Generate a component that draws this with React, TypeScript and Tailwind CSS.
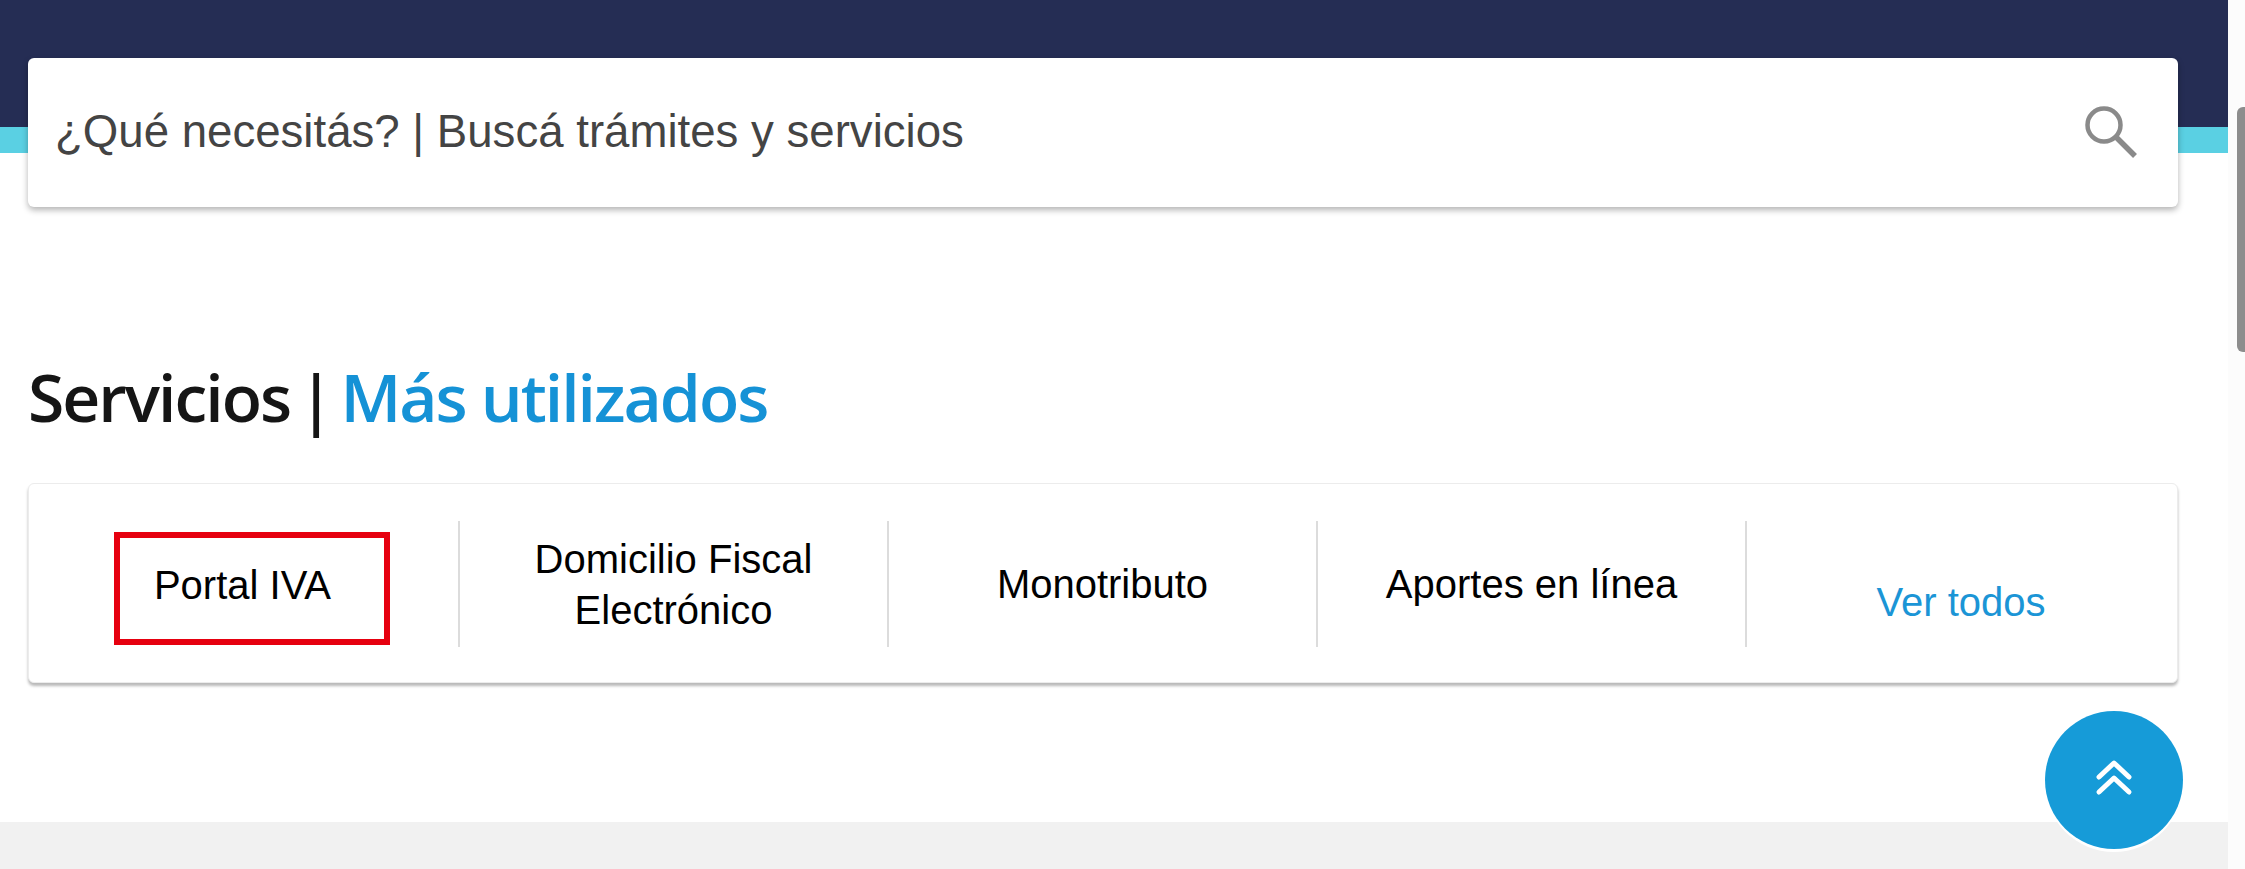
const services = [
    { label: ["Portal IVA"], marked: true },
    { label: ["Domicilio Fiscal", "Electrónico"] },
    { label: ["Monotributo"] },
    { label: ["Aportes en línea"] },
]

export default function App() {
    return (
        <div className="relative flex h-[869px] w-full overflow-hidden bg-white font-['Liberation_Sans',Arial,sans-serif]">
            <main className="flex w-[2228px] flex-col">
                <header className="h-[153px] border-b-[26px] border-[#5ad0e3] bg-[#252d54]" />

                <div className="relative mx-[28px] -mt-[95px] flex h-[149px] w-[2150px] items-center justify-between rounded-md bg-white pb-[2px] pl-[27px] pr-[40px] shadow-[0_3px_6px_rgba(0,0,0,0.3)]">
                    <span className="text-[45.6px] leading-none text-[#444444]">¿Qué necesitás? | Buscá trámites y servicios</span>
                    <svg width="54" height="54" viewBox="0 0 54 54" fill="none" stroke="#8a8a8a" strokeWidth="4.5">
                        <circle cx="20" cy="20" r="16.5" />
                        <path d="M32 32 L51 51" strokeWidth="5.5" />
                    </svg>
                </div>

                <h2 className="mx-[28px] mt-[134px] h-[110px] text-[66px] font-semibold leading-[110px] tracking-[-2px] text-[#151515] font-['Open_Sans',sans-serif]">
                    Servicios<span className="mx-[8px]">|</span><span className="text-[#1592d6]">Más utilizados</span>
                </h2>

                <section className="mx-[28px] mt-[32px] flex h-[200px] w-[2150px] items-center rounded-md border border-[#ececec] bg-white pl-[2px] shadow-[0_3px_3px_rgba(0,0,0,0.28)]">
                    {services.map((service, i) => (
                        <div key={i} className="mt-[2px] flex h-[126px] w-[429px] items-center justify-center border-r-2 border-[#dcdcdc] text-center text-[40px] leading-[51px] text-black">
                            {service.marked ? (
                                <div className="ml-[14px] mt-[8px] flex h-[113px] w-[276px] shrink-0 items-center justify-center border-[6px] border-[#e6000f] pb-[6px] pr-[18px]">
                                    {service.label[0]}
                                </div>
                            ) : (
                                <div className="mt-[1px]">
                                    {service.label.map((line) => (
                                        <div key={line}>{line}</div>
                                    ))}
                                </div>
                            )}
                        </div>
                    ))}
                    <div className="mt-[2px] flex h-[126px] flex-1 items-center justify-center pr-[2px] pt-[36px] text-[40px] text-[#1b95d6]">Ver todos</div>
                </section>

                <div className="mt-[139px] flex-1 bg-[#f1f1f1]" />
            </main>

            <aside className="flex-1 bg-[#fcfcfc] pl-[9px] pt-[107px]">
                <div className="h-[245px] rounded-l-md bg-[#8d8d8d]" />
            </aside>

            <button className="absolute left-[2045px] top-[711px] flex h-[138px] w-[138px] items-center justify-center rounded-full bg-[#169bd8] pb-[4px] shadow-[0_3px_0_white]">
                <svg width="42" height="42" viewBox="0 0 42 42" fill="none" stroke="white" strokeWidth="5" strokeLinecap="round" strokeLinejoin="round">
                    <path d="M6 20 L21 6 L36 20" />
                    <path d="M6 35 L21 21 L36 35" />
                </svg>
            </button>
        </div>
    )
}
